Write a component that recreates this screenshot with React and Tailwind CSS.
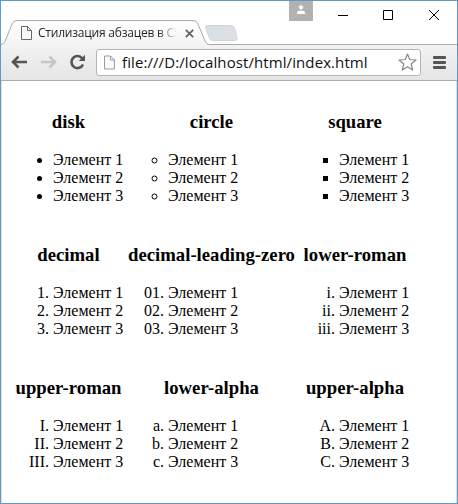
const rows = [
  [
    { name: 'disk', list: 'list-[disc]' },
    { name: 'circle', list: 'list-[circle]' },
    { name: 'square', list: 'list-[square]' },
  ],
  [
    { name: 'decimal', list: 'list-[decimal]' },
    { name: 'decimal-leading-zero', list: 'list-[decimal-leading-zero]' },
    { name: 'lower-roman', list: 'list-[lower-roman]' },
  ],
  [
    { name: 'upper-roman', list: 'list-[upper-roman]' },
    { name: 'lower-alpha', list: 'list-[lower-alpha]' },
    { name: 'upper-alpha', list: 'list-[upper-alpha]' },
  ],
];

function PageIcon({ className, stroke }) {
  return (
    <svg className={className} viewBox="0 0 11 14" fill="#fafafa" stroke={stroke}>
      <path d="M.5 .5H6.5L10.5 4.5V13.5H.5Z" />
      <path d="M6.5 .5V4.5H10.5" fill="none" />
    </svg>
  );
}

function TitleBar() {
  return (
    <div className="relative h-[43px] shrink-0">
      <svg className="absolute left-0 top-0 h-[44px] w-[456px]" viewBox="1 1 456 44">
        <defs>
          <linearGradient id="tab" x1="0" y1="0" x2="0" y2="1">
            <stop offset="0" stopColor="#ffffff" />
            <stop offset="1" stopColor="#f3f3f3" />
          </linearGradient>
        </defs>
        <path d="M205.5 27.5Q205 25.5 207.5 25.5H231Q233.5 25.5 234.5 28L237 37.5Q238 40.5 235.5 40.5H213Q210.5 40.5 209.5 38Z" fill="#dcdfe6" stroke="#d2d4da" />
        <path d="M1 44.5Q4 44 5 41.5L12 24Q13.5 20.5 17 20.5H193Q196.5 20.5 198 24L205 41Q206.5 44.5 209 44.5V46H1Z" fill="url(#tab)" />
        <path d="M1 44.5Q4 44 5 41.5L12 24Q13.5 20.5 17 20.5H193Q196.5 20.5 198 24L205 41Q206.5 44.5 209 44.5H457" fill="none" stroke="#a9a9a9" />
      </svg>
      <div className="relative flex h-[43px]">
        <div className="flex w-[205px] items-center pl-[20px] pt-[21px]">
          <PageIcon className="h-[14px] w-[11px]" stroke="#696969" />
          <div className="ml-[6px] w-[139px] whitespace-nowrap bg-gradient-to-r from-[#222] from-[86%] to-transparent bg-clip-text font-['Open_Sans',sans-serif] text-[12px] leading-[20px] tracking-[-0.22px] text-transparent">
            Стилизация абзацев в CS
          </div>
          <svg className="ml-[8px] h-[9px] w-[9px]" viewBox="0 0 9 9" stroke="#606060" strokeWidth="1.7">
            <path d="M.8 .8L8.2 8.2M8.2 .8L.8 8.2" />
          </svg>
        </div>
        <div className="ml-[83px] flex h-[20px] w-[24px] justify-center bg-[#b2b2b2]">
          <svg className="mt-[4px] h-[9px] w-[10px]" viewBox="0 0 10 9" fill="white">
            <circle cx="5" cy="2.300" r="2.100" />
            <path d="M1 9V7.5Q1 5.5 5 5.5T9 7.5V9Z" />
          </svg>
        </div>
        <svg className="ml-[25px] mt-[8px] h-[12px] w-[102px]" viewBox="0 0 102 12" fill="none" stroke="black">
          <path d="M0 6.5H10" />
          <path d="M45.5 1.5H54.5V10.5H45.5Z" />
          <path d="M91 1L101 11M101 1L91 11" />
        </svg>
      </div>
    </div>
  );
}

function Toolbar() {
  return (
    <div className="flex h-[37px] shrink-0 items-center border-b border-[#adadad] bg-gradient-to-b from-[#f3f3f3] to-[#e5e5e5]">
      <svg className="ml-[10px] h-[16px] w-[76px] shrink-0" viewBox="0 0 76 16" fill="none">
        <path d="M16 8H3M7.5 2.5L2 8L7.5 13.5" stroke="#555" strokeWidth="2.6" />
        <path d="M30 8H43M38.5 2.5L44 8L38.5 13.5" stroke="#c5c5c5" strokeWidth="2.6" />
        <path d="M71.5 4.7A6 6 0 1 0 72 10.5" stroke="#555" strokeWidth="2.6" />
        <path d="M74 .8V7H67.8Z" fill="#555" />
      </svg>
      <div className="ml-[9px] flex h-[27px] w-[325px] items-center rounded-[3px] border border-[#b5b5b5] bg-white">
        <PageIcon className="ml-[7px] h-[15px] w-[11px]" stroke="#9b9b9b" />
        <div className="ml-[7px] flex-1 whitespace-nowrap font-['Open_Sans',sans-serif] text-[15px] leading-[22px] tracking-[0.09px] text-[#111]">
          file:///D:/localhost/html/index.html
        </div>
        <svg className="mr-[3px] h-[18px] w-[19px]" viewBox="0 0 19 18" fill="white" stroke="#888" strokeWidth="1.2" strokeLinejoin="round">
          <path d="M9.5 1L11.7 6.5L18 7L13.2 11L14.7 17L9.5 13.7L4.3 17L5.8 11L1 7L7.3 6.5Z" />
        </svg>
      </div>
      <div className="ml-[12px] flex w-[13px] flex-col gap-[2px]">
        <div className="h-[3px] rounded-[1px] bg-[#555]" />
        <div className="h-[3px] rounded-[1px] bg-[#555]" />
        <div className="h-[3px] rounded-[1px] bg-[#555]" />
      </div>
    </div>
  );
}

export default function App() {
  return (
    <div className="flex h-[504px] w-[458px] flex-col overflow-hidden border border-[#5f9acb] bg-white">
      <TitleBar />
      <Toolbar />
      <main className="flex-1 border-x border-b border-[#e0e0e0] pl-[11px] pt-[30px] font-['Liberation_Serif','Times_New_Roman',serif] text-black">
        {rows.map((row) => (
          <div key={row[0].name} className="grid h-[133px] grid-cols-[111px_167px_112px] content-start gap-x-[4px]">
            {row.map((item) => (
              <section key={item.name}>
                <h3 className="h-[40px] whitespace-nowrap text-center text-[18.72px] font-bold leading-[21px]">{item.name}</h3>
                <ul className={`${item.list} pl-[40px] text-[16px] leading-[18px]`}>
                  <li>Элемент 1</li>
                  <li>Элемент 2</li>
                  <li>Элемент 3</li>
                </ul>
              </section>
            ))}
          </div>
        ))}
      </main>
    </div>
  );
}
